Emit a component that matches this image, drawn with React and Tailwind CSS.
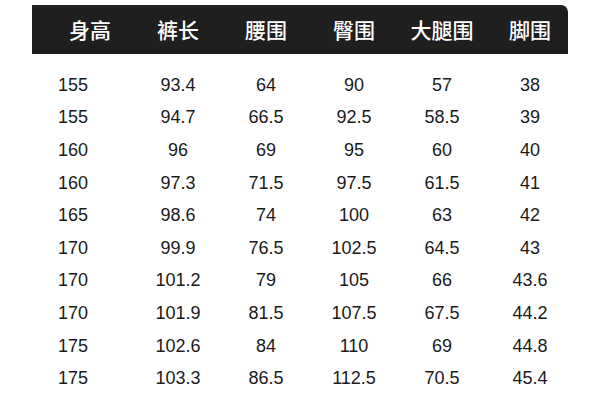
import React from "react";

const heads = ["身高", "裤长", "腰围", "臀围", "大腿围", "脚围"];

const rows = [
  ["155", "93.4", "64", "90", "57", "38"],
  ["155", "94.7", "66.5", "92.5", "58.5", "39"],
  ["160", "96", "69", "95", "60", "40"],
  ["160", "97.3", "71.5", "97.5", "61.5", "41"],
  ["165", "98.6", "74", "100", "63", "42"],
  ["170", "99.9", "76.5", "102.5", "64.5", "43"],
  ["170", "101.2", "79", "105", "66", "43.6"],
  ["170", "101.9", "81.5", "107.5", "67.5", "44.2"],
  ["175", "102.6", "84", "110", "69", "44.8"],
  ["175", "103.3", "86.5", "112.5", "70.5", "45.4"],
];

export default function App() {
  return (
    <div className="w-[600px] h-[400px] bg-white overflow-hidden pt-[5px]">
      <div className="ml-[32px] w-[536px] h-[49px] bg-[#1f1f1f] rounded-tr-[7px] flex items-center">
        <div className="grid grid-cols-[repeat(6,88px)] pl-[14px] shrink-0">
          {heads.map((h) => (
            <div
              key={h}
              className="text-center text-white text-[21px] font-medium leading-none font-['Noto_Sans_CJK_SC',sans-serif]"
            >
              {h}
            </div>
          ))}
        </div>
      </div>
      <div className="mt-[15px] ml-[46px] font-['Liberation_Sans',Arial,sans-serif] text-[18px] text-[#1a1a1a]">
        {rows.map((r, i) => (
          <div key={i} className="grid grid-cols-[repeat(6,88px)] h-[32.6px] items-center">
            {r.map((v, j) => (
              <div key={j} className={j === 0 ? "text-center pr-[34px]" : "text-center"}>
                {v}
              </div>
            ))}
          </div>
        ))}
      </div>
    </div>
  );
}
